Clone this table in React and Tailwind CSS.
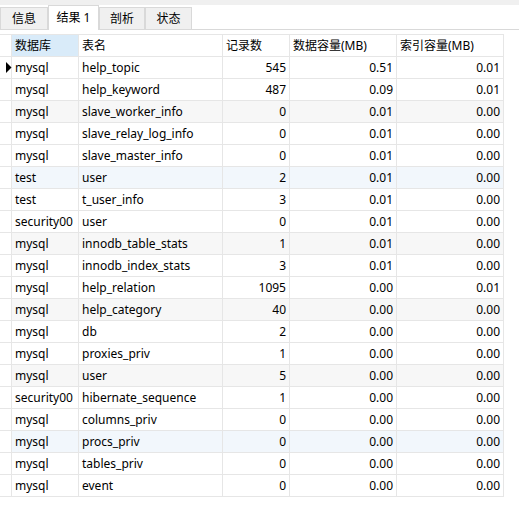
const ROWS = [
  ["mysql", "help_topic", "545", "0.51", "0.01"],
  ["mysql", "help_keyword", "487", "0.09", "0.01"],
  ["mysql", "slave_worker_info", "0", "0.01", "0.00"],
  ["mysql", "slave_relay_log_info", "0", "0.01", "0.00"],
  ["mysql", "slave_master_info", "0", "0.01", "0.00"],
  ["test", "user", "2", "0.01", "0.00"],
  ["test", "t_user_info", "3", "0.01", "0.00"],
  ["security00", "user", "0", "0.01", "0.00"],
  ["mysql", "innodb_table_stats", "1", "0.01", "0.00"],
  ["mysql", "innodb_index_stats", "3", "0.01", "0.00"],
  ["mysql", "help_relation", "1095", "0.00", "0.01"],
  ["mysql", "help_category", "40", "0.00", "0.00"],
  ["mysql", "db", "2", "0.00", "0.00"],
  ["mysql", "proxies_priv", "1", "0.00", "0.00"],
  ["mysql", "user", "5", "0.00", "0.00"],
  ["security00", "hibernate_sequence", "1", "0.00", "0.00"],
  ["mysql", "columns_priv", "0", "0.00", "0.00"],
  ["mysql", "procs_priv", "0", "0.00", "0.00"],
  ["mysql", "tables_priv", "0", "0.00", "0.00"],
  ["mysql", "event", "0", "0.00", "0.00"],
];

// row tints as they show in the grid
const BG = { 2: "bg-[#f7f7f7]", 5: "bg-[#f2f7fc]", 8: "bg-[#f7f7f7]", 11: "bg-[#f7f7f7]", 14: "bg-[#f7f7f7]", 17: "bg-[#f2f7fc]" };

const TABS = ["信息", "结果 1", "剖析", "状态"];
const TAB_W = ["w-[48px]", "w-[51px]", "w-[46px]", "w-[47px]"];

function Cell({ w, right, className = "", children }) {
  return (
    <div className={`${w} shrink-0 h-full flex items-center border-r border-[#e6e6e6] px-[3px] ${right ? "justify-end" : ""} ${className}`}>
      {children}
    </div>
  );
}

export default function App() {
  return (
    <div className="w-[519px] h-[513px] bg-white text-[12px] text-black overflow-hidden" style={{ fontFamily: '"Noto Sans", "Noto Sans CJK SC", sans-serif' }}>
      <div className="h-[5px] bg-[#f0f0f0]" />
      <div className="h-[25px] flex items-end border-b border-[#d9d9d9]">
        {TABS.map((t, i) =>
          i === 1 ? (
            <div key={t} className={`${TAB_W[i]} h-[25px] -mb-px bg-white border border-b-0 border-[#d9d9d9] flex items-center justify-center`}>{t}</div>
          ) : (
            <div key={t} className={`${TAB_W[i]} h-[22px] bg-[#f0f0f0] border border-b-0 border-[#d9d9d9] flex items-center justify-center`}>{t}</div>
          )
        )}
      </div>
      <div className="h-[4px]" />
      <div className="w-[504px]">
        <div className="h-[23px] flex border-y border-[#e6e6e6]">
          <Cell w="w-[12px]" className="px-0" />
          <Cell w="w-[67px]" className="bg-[#d9ebf9]">数据库</Cell>
          <Cell w="w-[144px]">表名</Cell>
          <Cell w="w-[67px]">记录数</Cell>
          <Cell w="w-[107px]">数据容量(MB)</Cell>
          <Cell w="w-[107px]">索引容量(MB)</Cell>
        </div>
        {ROWS.map((r, i) => (
          <div key={i} className={`h-[22px] flex border-b border-[#e6e6e6] ${BG[i] || ""}`}>
            <Cell w="w-[12px]" className="px-0 bg-white">
              {i === 0 && (
                <svg width="6" height="11" viewBox="0 0 6 11" className="ml-[3px] shrink-0 w-[6px] h-[11px]">
                  <path d="M0 0 L5.5 5.5 L0 11 Z" fill="#000" />
                </svg>
              )}
            </Cell>
            <Cell w="w-[67px]">{r[0]}</Cell>
            <Cell w="w-[144px]">{r[1]}</Cell>
            <Cell w="w-[67px]" right>{r[2]}</Cell>
            <Cell w="w-[107px]" right>{r[3]}</Cell>
            <Cell w="w-[107px]" right>{r[4]}</Cell>
          </div>
        ))}
      </div>
    </div>
  );
}
